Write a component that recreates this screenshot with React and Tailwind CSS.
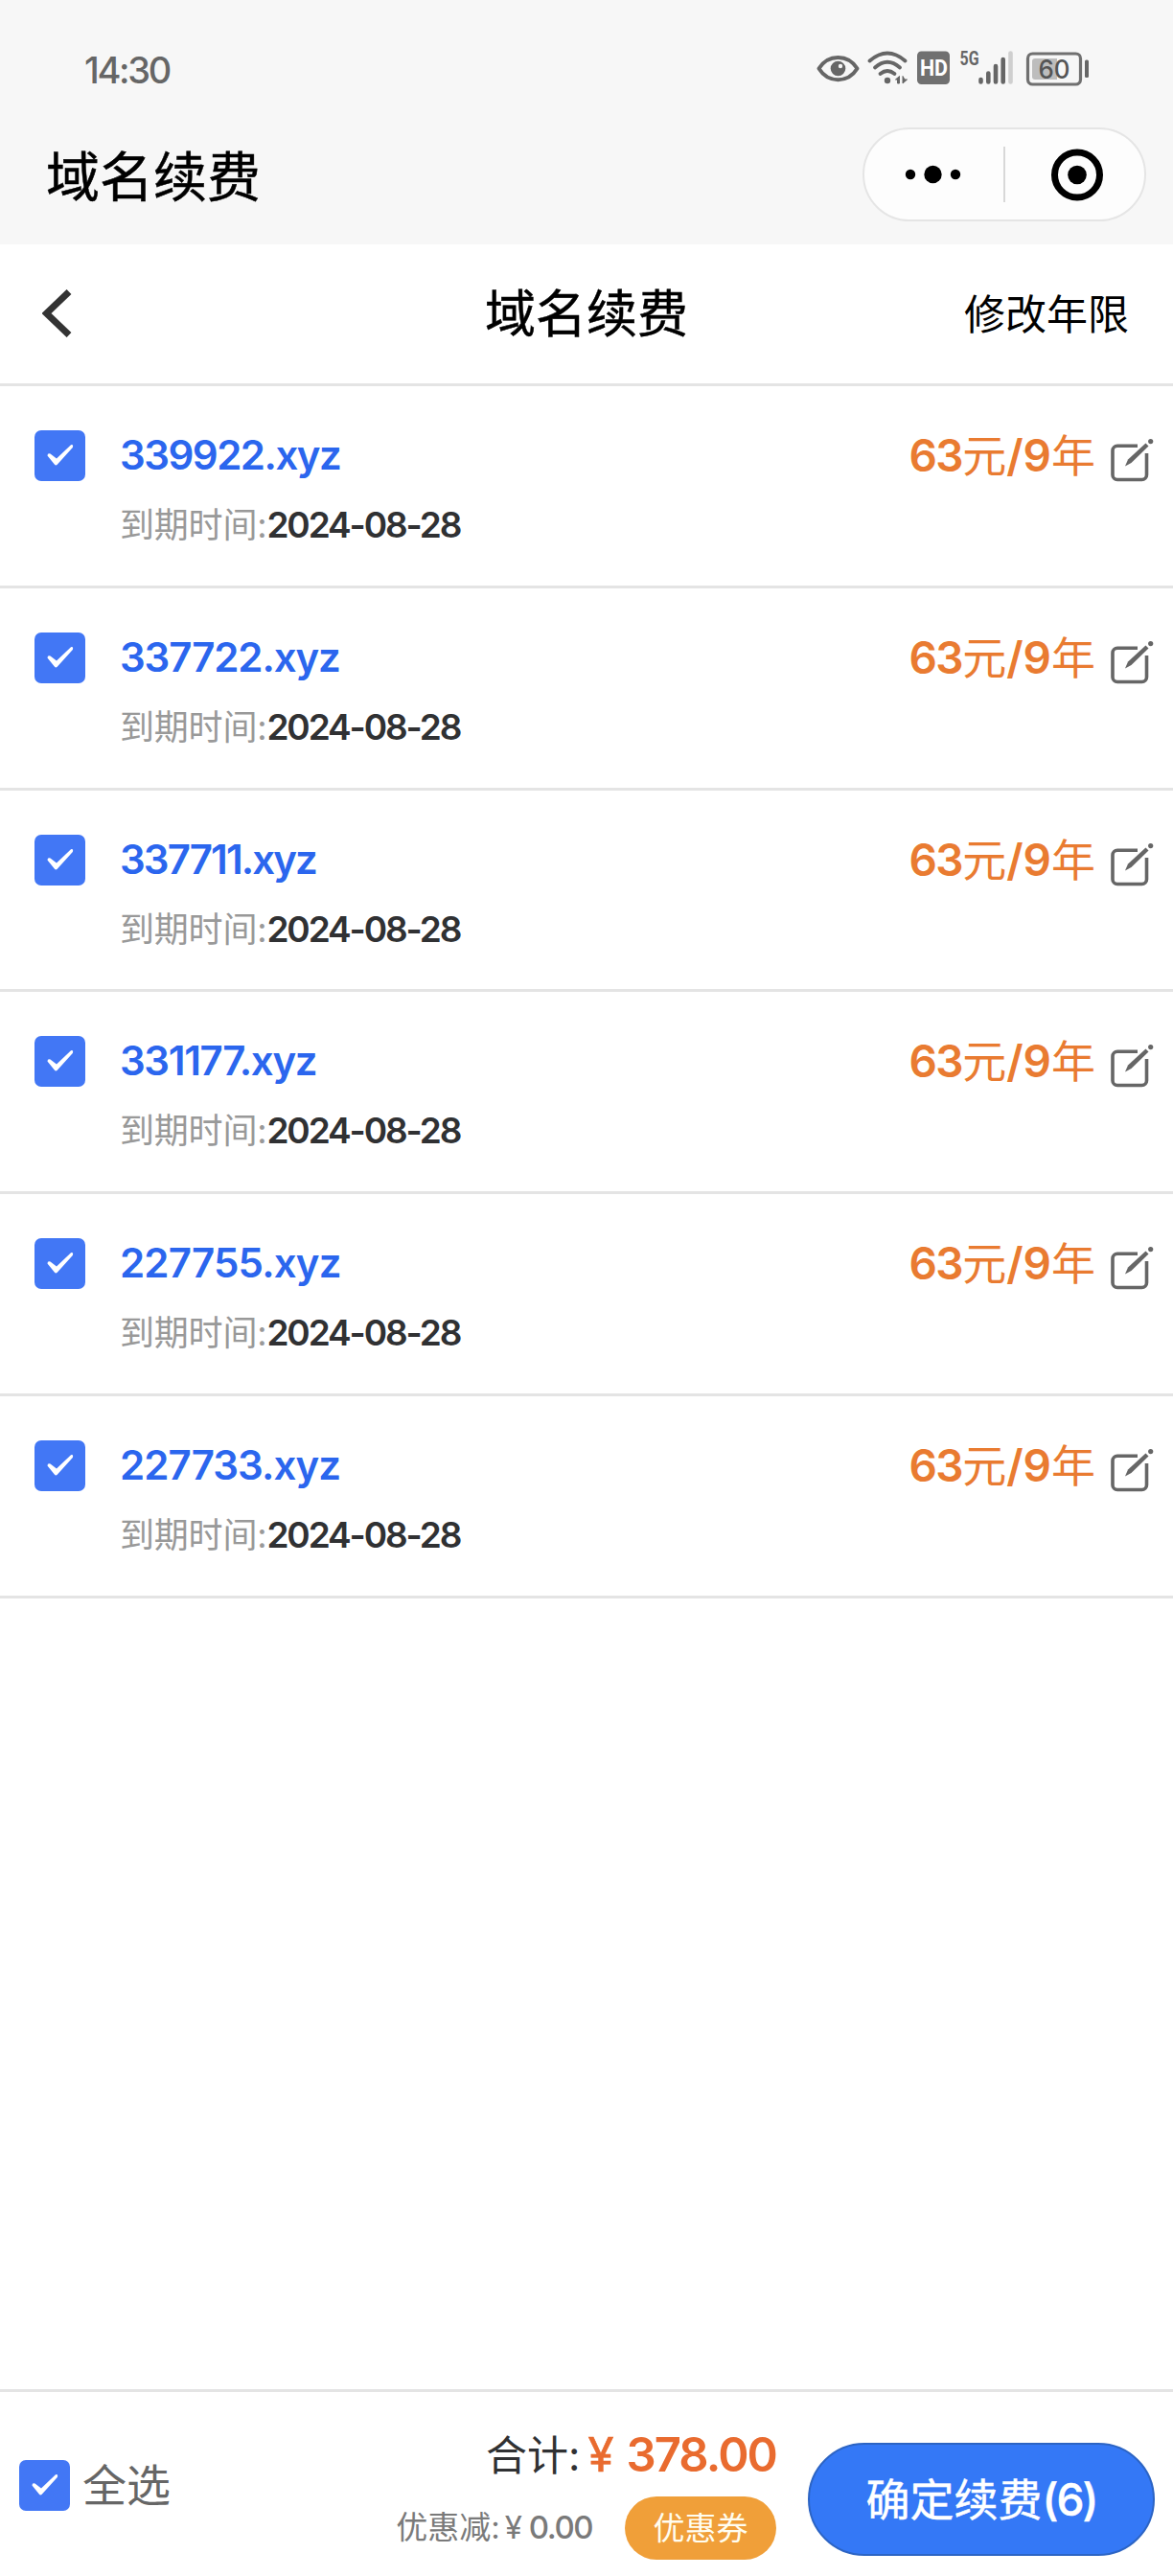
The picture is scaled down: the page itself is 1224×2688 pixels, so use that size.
import React from "react";

const domains = [
  { name: "339922.xyz", tracking: "tracking-[-1.5px]" },
  { name: "337722.xyz", tracking: "tracking-[-1.1px]" },
  { name: "337711.xyz", tracking: "tracking-[-1.9px]" },
  { name: "331177.xyz", tracking: "tracking-[-1.35px]" },
  { name: "227755.xyz", tracking: "tracking-[-0.8px]" },
  { name: "227733.xyz", tracking: "tracking-[-0.9px]" },
];

function Checkbox() {
  return (
    <span className="flex size-[53px] shrink-0 items-center justify-center rounded-[7px] bg-[#4277f5]">
      <svg width="53" height="53" viewBox="0 0 53 53">
        <path d="M13.500 26.500Q13.500 23.500 16.500 24.500L23 29.500L38 15.200Q41 14.500 39.800 18L23.500 36Q22 37 20.800 35.500Z" fill="#fff" />
      </svg>
    </span>
  );
}

function EditIcon() {
  return (
    <svg width="46" height="46" viewBox="0 0 46 46" fill="none" stroke="#666" strokeWidth="3.6" className="shrink-0">
      <path d="M29 7.200H8a5 5 0 0 0-5 5V37.500a5 5 0 0 0 5 5H33.500a5 5 0 0 0 5-5V15" />
      <path d="M16 28.500L19 21.500L37.500 4.500L40.500 7.500L22.500 25Z" fill="#666" stroke="none" />
      <circle cx="42.700" cy="2.600" r="2.600" fill="#666" stroke="none" />
    </svg>
  );
}

function StatusIcons() {
  return (
    <svg width="286" height="40" viewBox="0 0 286 40" fill="none" className="shrink-0">
      <path d="M2.500 21.500C12 6 33 6 42.500 21.500C33 37 12 37 2.500 21.500Z" stroke="#666" strokeWidth="4" strokeLinejoin="round" />
      <circle cx="22.500" cy="21.500" r="7.800" fill="#666" />
      <circle cx="25" cy="19" r="2.200" fill="#f7f7f7" />
      <g stroke="#666" strokeWidth="3.800" strokeLinecap="round">
        <path d="M55.500 13.500Q74 -2.500 92.500 13.500" />
        <path d="M61 20.500Q74 9 87 20.500" />
        <path d="M66.500 27Q74 21 81.500 27" />
      </g>
      <circle cx="74" cy="34" r="3.200" fill="#666" />
      <path d="M86.500 29.500V37H84.500V33H82.500ZM90 29.500V37L94.500 33H92Z" fill="#666" stroke="#666" strokeWidth="1" />
      <rect x="105" y="3.500" width="34" height="34.500" rx="4.500" fill="#707070" />
      <text x="122.500" y="29" textAnchor="middle" fill="#fff" fontSize="23.500" fontWeight="700" textLength="29" lengthAdjust="spacingAndGlyphs" fontFamily="Roboto, sans-serif">HD</text>
      <text x="149.500" y="18" fill="#666" fontSize="20" fontWeight="700" textLength="20" lengthAdjust="spacingAndGlyphs" fontFamily="Roboto, sans-serif">5G</text>
      <g strokeWidth="4.600" strokeLinecap="round" stroke="#666">
        <path d="M171.500 33V35.500M179.300 26.500V35.500M187 19V35.500M194.700 12V35.500" />
        <path d="M202.500 5.500V35.500" stroke="#cfcfcf" />
      </g>
      <rect x="220.500" y="6" width="55" height="32" rx="5" stroke="#707070" strokeWidth="3.200" />
      <path d="M228 11H251V33H228a3 3 0 0 1-3-3V14a3 3 0 0 1 3-3Z" fill="#bdbdbd" />
      <text x="248" y="31.500" textAnchor="middle" fill="#555" fontSize="27" fontWeight="500" textLength="33" lengthAdjust="spacingAndGlyphs" fontFamily="Inter, sans-serif">60</text>
      <rect x="280" y="12.500" width="4" height="18.500" rx="1.500" fill="#666" />
    </svg>
  );
}

function Row({ name, tracking }) {
  return (
    <li className="flex h-[210.83px] items-start border-b-[3px] border-[#e4e4e4] pr-[20px] pl-9">
      <div className="pt-[46px]"><Checkbox /></div>
      <div className="pt-[47px] pl-[36px]">
        <div className={`h-[50px] text-[42px] leading-[50px] font-semibold text-[#2b66ee] ${tracking}`}>{name}</div>
        <div className="mt-[23px] flex h-[50px] items-center text-[36px] leading-[50px] text-[#999]">
          <span className="tracking-[-0.200px]">到期时间:</span>
          <span className="text-[37px] font-semibold tracking-[-2.1px] text-[#303133]">2024-08-28</span>
        </div>
      </div>
      <div className="ml-auto flex items-start">
        <div className="mt-[45px] mr-[15px] h-[54px] text-[46px] leading-[54px] text-[#e97b31]">
          <b className="font-semibold tracking-[-1.500px]">63</b>元<b className="font-semibold">/9</b>年
        </div>
        <div className="pt-[55px]"><EditIcon /></div>
      </div>
    </li>
  );
}

export default function App() {
  return (
    <div className="flex h-[2688px] w-[1224px] flex-col bg-white font-['Inter','Noto_Sans_CJK_SC',sans-serif] whitespace-nowrap text-black">
      <header className="flex h-[255px] flex-col bg-[#f7f7f7]">
        <div className="flex h-[133px] items-start justify-between pr-[86px] pl-[88px]">
          <div className="pt-[49px] text-[38px] leading-[48px] font-medium tracking-[-2.300px] text-[#666]">14:30</div>
          <div className="pt-[50px]"><StatusIcons /></div>
        </div>
        <div className="flex h-[98px] items-center justify-between pr-7 pl-12">
          <h1 className="pt-[6px] text-[56px] leading-[92px] [-webkit-text-stroke:0.5px_#000]">域名续费</h1>
          <div className="flex h-[98px] w-[296px] items-center rounded-full border-2 border-[#e5e5e5] bg-[#fdfdfd]">
            <svg width="292" height="94" viewBox="0 0 292 94">
              <circle cx="48" cy="47" r="5.200" />
              <circle cx="71.500" cy="47" r="9.200" />
              <circle cx="95" cy="47" r="5.200" />
              <path d="M146 18V76" stroke="#d8d8d8" strokeWidth="2" />
              <circle cx="222" cy="47.500" r="23.500" fill="none" stroke="#000" strokeWidth="7" />
              <circle cx="222" cy="47.500" r="9.800" />
            </svg>
          </div>
        </div>
      </header>

      <nav className="grid h-[148px] grid-cols-3 items-center border-b-[3px] border-[#e4e4e4] pr-[46px] pl-[46px]">
        <svg width="32" height="50" viewBox="0 0 32 50" className="mb-[2px] -ml-[2px]">
          <path d="M28 2.500L4.500 25L28 47.500" fill="none" stroke="#333" strokeWidth="7" />
        </svg>
        <h2 className="text-center text-[53px] leading-[60px] [-webkit-text-stroke:0.5px_#000]">域名续费</h2>
        <span className="text-right text-[43px] leading-[60px]">修改年限</span>
      </nav>

      <ul>
        {domains.map((d) => <Row key={d.name} {...d} />)}
      </ul>

      <footer className="mt-auto flex h-[195px] items-start border-t-[3px] border-[#e4e4e4] pr-[19px] pl-5">
        <div className="flex items-center pt-[71px]">
          <Checkbox />
          <span className="ml-[13px] text-[46px] leading-[53px] text-[#666]">全选</span>
        </div>
        <div className="ml-auto flex w-[400px] flex-col items-end">
          <div className="mt-[36px] flex h-[60px] items-center text-[43px] leading-[60px] text-[#303133]">
            <span>合计:</span>
            <span className="ml-[8px] text-[49px] text-[#e96b2f] [-webkit-text-stroke:0.6px_#e96b2f]">¥</span>
            <span className="ml-[13px] text-[49px] font-semibold tracking-[-1.900px] text-[#e96b2f]">378.00</span>
          </div>
          <div className="mt-[13px] flex h-[66px] items-center">
            <span className="text-[33px] text-[#7a7a7a]">优惠减:</span>
            <span className="ml-[5px] text-[33px] text-[#7a7a7a]">¥</span>
            <span className="ml-[7px] text-[33px] font-medium tracking-[-1.500px] text-[#7a7a7a]">0.00</span>
            <button className="ml-[34px] h-[66px] w-[158px] rounded-full bg-[#f09f39] text-[33px] leading-[66px] text-[#fffdf0]">优惠券</button>
          </div>
        </div>
        <button className="mt-[53px] ml-[33px] h-[118px] w-[362px] rounded-full border-2 border-[#2c64c4] bg-[#3478f6] text-[46px] leading-[114px] text-white [-webkit-text-stroke:0.5px_#fff]">确定续费<span className="font-medium tracking-[-2px]">(6)</span></button>
      </footer>
    </div>
  );
}
